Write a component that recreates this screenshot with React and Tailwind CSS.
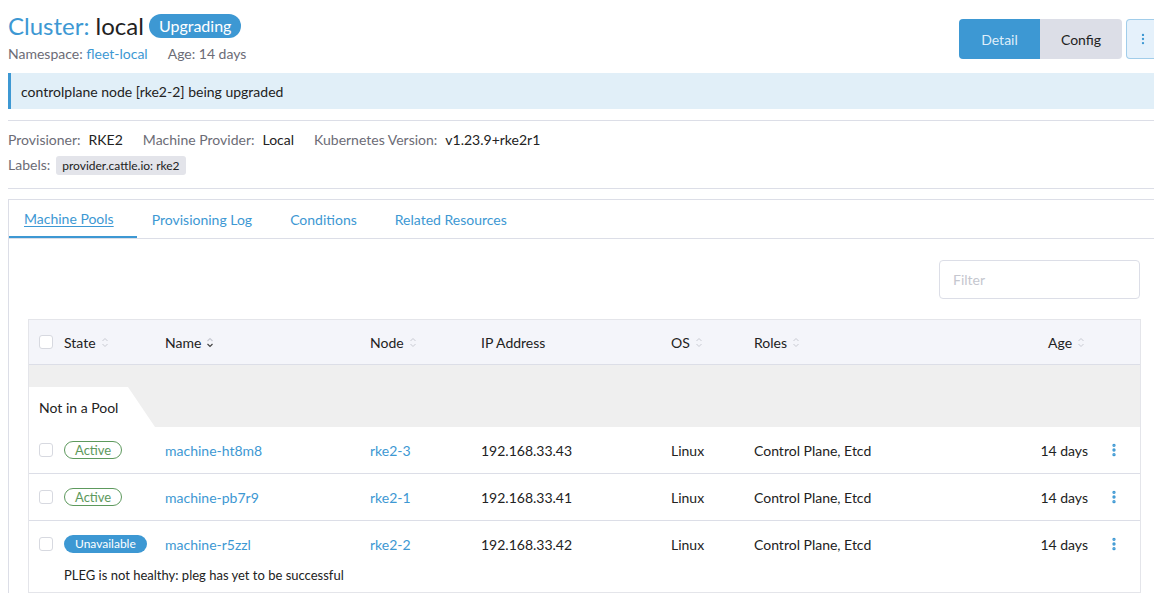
import { EllipsisVertical } from 'lucide-react';

const rows = [
  { state: 'Active', name: 'machine-ht8m8', node: 'rke2-3', ip: '192.168.33.43' },
  { state: 'Active', name: 'machine-pb7r9', node: 'rke2-1', ip: '192.168.33.41' },
  { state: 'Unavailable', name: 'machine-r5zzl', node: 'rke2-2', ip: '192.168.33.42', msg: 'PLEG is not healthy: pleg has yet to be successful' },
];

function Sort() {
  return (
    <svg width="8" height="11" viewBox="0 0 8 11" className="ml-[5px] inline-block" fill="none" stroke="#c9cbd3" strokeWidth="1">
      <path d="M1.5 4 L4 1.5 L6.5 4" />
      <path d="M1.5 7 L4 9.5 L6.5 7" />
    </svg>
  );
}

function SortDown() {
  return (
    <svg width="8" height="11" viewBox="0 0 8 11" className="ml-[5px] inline-block" fill="none" strokeWidth="1.2">
      <path d="M1.5 4 L4 1.5 L6.5 4" stroke="#c9cbd3" />
      <path d="M1.5 7 L4 9.5 L6.5 7" stroke="#444" />
    </svg>
  );
}

function Check() {
  return <span className="inline-block w-[14px] h-[14px] rounded-[3px] border border-[#d7d9e0] bg-white" />;
}

export default function App() {
  return (
    <div className="min-h-screen bg-white text-[#222] overflow-hidden" style={{ fontFamily: 'Lato, "Open Sans", sans-serif' }}>
      <div className="pl-2 w-[1160px]">
        {/* Header */}
        <div className="flex justify-between items-start pt-[12px]">
          <div>
            <div className="flex items-center gap-[5px] h-[28px]">
              <h1 className="text-[24px] leading-[28px]">
                <span className="text-[#3d98d3]">Cluster:</span> local
              </h1>
              <span className="bg-[#3d98d3] text-white text-[16px] leading-[24px] px-[10px] rounded-full">Upgrading</span>
            </div>
            <div className="text-[14px] leading-[20px] text-[#6c6c76] mt-[4px]">
              Namespace: <span className="text-[#3d98d3]">fleet-local</span>
              <span className="ml-[20px]">Age: 14 days</span>
            </div>
          </div>
          <div className="flex items-center mt-[7px]">
            <button className="h-10 w-[81px] bg-[#3d98d3] text-[#dfeefa] text-[14px] rounded-l-[4px]">Detail</button>
            <button className="h-10 w-[82px] bg-[#dcdee7] text-[#222] text-[14px] rounded-r-[4px]">Config</button>
            <button className="h-10 w-[34px] ml-[4px] bg-[#e5f1fb] border border-[#3d98d3]/40 rounded-[4px] flex items-center justify-center text-[#3d98d3]">
              <EllipsisVertical size={14} />
            </button>
          </div>
        </div>

        {/* Banner */}
        <div className="mt-[9px] h-[36px] bg-[#e1eff8] border-l-[3px] border-[#3d98d3] flex items-center pl-[10px] text-[14px]">
          controlplane node [rke2-2] being upgraded
        </div>

        <div className="mt-[11px] border-t border-[#dcdee7]" />

        {/* Details */}
        <div className="pt-[9px] text-[14px] leading-[20px]">
          <div className="flex gap-[20px]">
            <div><span className="text-[#6c6c76]">Provisioner:</span><span className="ml-[8px]">RKE2</span></div>
            <div><span className="text-[#6c6c76]">Machine Provider:</span><span className="ml-[8px]">Local</span></div>
            <div><span className="text-[#6c6c76]">Kubernetes Version:</span><span className="ml-[8px]">v1.23.9+rke2r1</span></div>
          </div>
          <div className="flex items-center mt-[5px]">
            <span className="text-[#6c6c76]">Labels:</span>
            <span className="ml-[6px] bg-[#e3e4ea] text-[12px] leading-[19px] px-[6px] rounded-[3px]">provider.cattle.io: rke2</span>
          </div>
        </div>

        <div className="mt-[13px] border-t border-[#dcdee7]" />

        {/* Tabs panel */}
        <div className="mt-[10px] border-l border-t border-[#dcdee7]">
          <div className="flex h-[39px] border-b border-[#dcdee7] text-[14px] text-[#3d98d3]">
            <div className="pl-[15px] pr-[23px] flex items-center border-b-2 border-[#3d98d3] underline underline-offset-2">Machine Pools</div>
            <div className="pl-[15px] pr-[23px] flex items-center">Provisioning Log</div>
            <div className="pl-[15px] pr-[23px] flex items-center">Conditions</div>
            <div className="pl-[15px] pr-[23px] flex items-center">Related Resources</div>
          </div>

          <div className="pl-[19px] pt-[21px]">
            <div className="w-[1112px] flex justify-end">
              <div className="w-[201px] h-[39px] border border-[#dcdee7] rounded-[4px] flex items-center px-[13px] text-[14px] text-[#c5c7cf]">Filter</div>
            </div>

            <div className="mt-[20px] w-[1113px] border border-[#e4e5ea] text-[14px]">
              {/* header */}
              <div className="flex items-center h-[45px] bg-[#f4f5fa] border-b border-[#dcdee7]">
                <div className="w-[35px] pl-[10px] flex items-center"><Check /></div>
                <div className="w-[101px] flex items-center">State<Sort /></div>
                <div className="w-[205px] flex items-center">Name<SortDown /></div>
                <div className="w-[111px] flex items-center">Node<Sort /></div>
                <div className="w-[190px]">IP Address</div>
                <div className="w-[83px] flex items-center">OS<Sort /></div>
                <div className="flex-1 flex items-center">Roles<Sort /></div>
                <div className="w-[92px] flex items-center">Age<Sort /></div>
              </div>

              {/* group */}
              <div className="h-[62px] bg-[#efefef] flex items-end">
                <div
                  className="h-[40px] w-[126px] bg-white flex items-center pl-[10px]"
                  style={{ clipPath: 'polygon(0 0, 99px 0, 126px 40px, 0 40px)' }}
                >
                  Not in a Pool
                </div>
              </div>

              {rows.map((r, i) => (
                <div key={r.name} className={i > 0 ? 'border-t border-[#dcdee7]' : ''}>
                  <div className="flex items-center h-[46px]">
                    <div className="w-[35px] pl-[10px] flex items-center"><Check /></div>
                    <div className="w-[101px] flex items-center">
                      {r.state === 'Active' ? (
                        <span className="border border-[#5d995d] text-[#5d995d] text-[13px] leading-[16px] px-[10px] rounded-full">Active</span>
                      ) : (
                        <span className="bg-[#3d98d3] text-white text-[12px] leading-[18px] px-[11px] rounded-full">Unavailable</span>
                      )}
                    </div>
                    <div className="w-[205px] text-[#3d98d3]">{r.name}</div>
                    <div className="w-[111px] text-[#3d98d3]">{r.node}</div>
                    <div className="w-[190px]">{r.ip}</div>
                    <div className="w-[83px]">Linux</div>
                    <div className="flex-1">Control Plane, Etcd</div>
                    <div className="w-[80px] text-right">14 days</div>
                    <div className="w-[52px] flex justify-center text-[#3d98d3]">
                      <EllipsisVertical size={16} strokeWidth={3} />
                    </div>
                  </div>
                  {r.msg && (
                    <div className="pl-[35px] pb-[8px] -mt-[1px] text-[13px] leading-[18px]">{r.msg}</div>
                  )}
                </div>
              ))}
            </div>
          </div>
        </div>
      </div>
    </div>
  );
}
